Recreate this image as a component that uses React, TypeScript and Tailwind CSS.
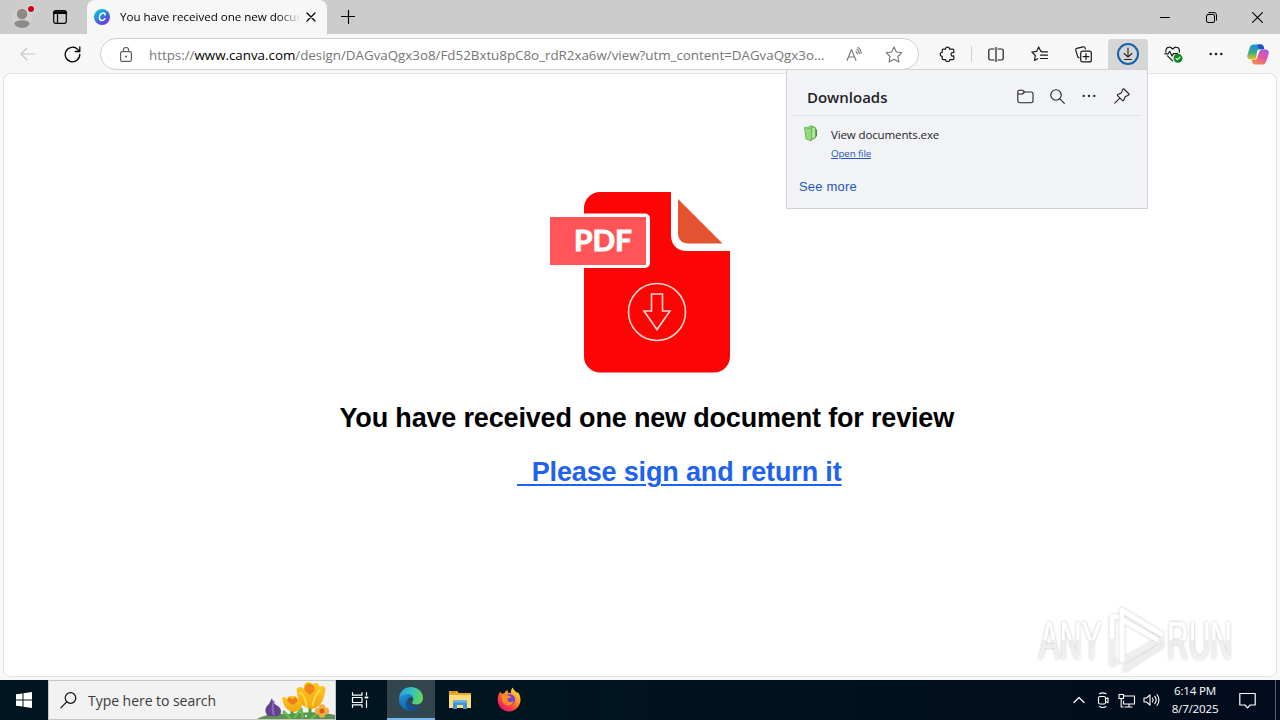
import type { ReactNode } from "react";

type IconProps = { w?: number; h?: number; vb?: string; className?: string; sw?: number; children: ReactNode };

function Icon({ w = 20, h = 20, vb, className = "", sw = 1.2, children }: IconProps) {
  return (
    <svg
      width={w}
      height={h}
      viewBox={vb ?? `0 0 ${w} ${h}`}
      fill="none"
      stroke="currentColor"
      strokeWidth={sw}
      strokeLinecap="round"
      strokeLinejoin="round"
      className={`block shrink-0 ${className}`}
    >
      {children}
    </svg>
  );
}

function Slot({ className, children }: { className: string; children: ReactNode }) {
  return <div className={`flex shrink-0 items-center justify-center ${className}`}>{children}</div>;
}

function CanvaLogo() {
  return (
    <svg width="16" height="16" viewBox="0 0 16 16" className="block shrink-0">
      <defs>
        <linearGradient id="canva" x1="0.15" y1="0.1" x2="0.8" y2="0.95">
          <stop offset="0" stopColor="#17c3cf" />
          <stop offset="0.45" stopColor="#2a7fdc" />
          <stop offset="1" stopColor="#7a2ae8" />
        </linearGradient>
      </defs>
      <circle cx="8" cy="8" r="8" fill="url(#canva)" />
      <path d="M10.900 6.100c.5-1.300-.2-2.200-1.500-2.200-2.200 0-4 2.300-4 4.700 0 1.900 1 3 2.500 3 1.300 0 2.400-.8 3-1.900" fill="none" stroke="#fff" strokeWidth="1.500" strokeLinecap="round" />
    </svg>
  );
}

function TabStrip() {
  return (
    <div className="flex h-[34px] shrink-0 bg-[#cccccc]">
      <div className="flex w-[87px] shrink-0 items-center">
        <Slot className="ml-[11px] w-[24px]">
          <svg width="24" height="26" viewBox="0 0 24 26" className="block">
            <circle cx="11" cy="13.500" r="10" fill="#d3d1cf" />
            <circle cx="11" cy="10" r="5.200" fill="#8d8986" />
            <path d="M3.500 19.500c0-2 3-3.300 7.500-3.300s7.500 1.300 7.500 3.300c0 2.200-3.300 4.300-7.500 4.300s-7.500-2.100-7.500-4.300z" fill="#8d8986" />
            <circle cx="20" cy="5" r="4" fill="#dddddd" />
            <circle cx="20" cy="5" r="3" fill="#d0021b" />
          </svg>
        </Slot>
        <Icon w={14} h={14} sw={1.200} className="ml-[18px] text-black">
          <rect x="0.700" y="0.700" width="12.600" height="12.600" rx="2" />
          <path d="M1 2h12M1 3.200h12" strokeWidth="1.600" />
          <path d="M4.500 4v9" />
        </Icon>
      </div>
      <div className="flex h-[34px] w-[240px] shrink-0 items-center rounded-t-[8px] bg-[#f7f7f7]">
        <div className="ml-[7px]">
          <CanvaLogo />
        </div>
        <div className="ml-[10px] w-[179px] overflow-hidden bg-linear-to-r from-black from-88% to-black/10 bg-clip-text text-[11.600px] leading-[20px] tracking-[-0.020px] whitespace-nowrap text-transparent">
          You have received one new docum
        </div>
        <Icon w={10} h={10} sw={1.200} className="ml-[7px] text-black">
          <path d="M1 1l8 8M9 1l-8 8" />
        </Icon>
      </div>
      <div className="flex grow items-center">
        <Icon w={14} h={14} sw={1.200} className="ml-[14px] text-black">
          <path d="M7.500 .5v13M.5 6.500h13" />
        </Icon>
      </div>
      <div className="flex shrink-0 items-center text-black">
        <Slot className="w-[46px]">
          <Icon w={10} h={10} sw={1}>
            <path d="M0 5.500h10" />
          </Icon>
        </Slot>
        <Slot className="w-[46px]">
          <Icon w={11} h={11} sw={1}>
            <rect x="0.500" y="2.500" width="8" height="8" rx="1.500" />
            <path d="M2.800 .6h5.200a2.500 2.500 0 0 1 2.500 2.500v5" />
          </Icon>
        </Slot>
        <Slot className="w-[46px]">
          <Icon w={11} h={11} sw={1.100}>
            <path d="M.6.6l9.800 9.800M10.400.6L.6 10.400" />
          </Icon>
        </Slot>
      </div>
    </div>
  );
}

function Copilot() {
  return (
    <svg width="22" height="21" viewBox="0 0 22 21" className="ml-px block">
      <defs>
        <linearGradient id="cpA" x1="0.300" y1="0" x2="0.300" y2="1">
          <stop offset="0" stopColor="#1b8fe0" />
          <stop offset="0.500" stopColor="#35a98a" />
          <stop offset="1" stopColor="#e8c416" />
        </linearGradient>
        <linearGradient id="cpB" x1="0.800" y1="0" x2="0.300" y2="1">
          <stop offset="0" stopColor="#a95be6" />
          <stop offset="0.500" stopColor="#e5569f" />
          <stop offset="1" stopColor="#f9864f" />
        </linearGradient>
      </defs>
      <path d="M7 .5h7c1.500 0 2.200 1 2.600 2.300l.7 2.400h-2.500c-1.500 0-2.400.8-2.900 2.300l-1.800 5.600c-.5 1.500-1.500 2.400-3 2.400H3.500C.8 15.500-.3 13.500.4 10.900L2.800 3.600C3.400 1.600 4.900.5 7 .5z" fill="url(#cpA)" />
      <path d="M10.500.5H14c1.500 0 2.200 1 2.600 2.300l.7 2.400h-3.500c-1.500 0-2.300-.8-2.700-2z" fill="#1f4fc4" />
      <path d="M15 20.500H8c-1.500 0-2.200-1-2.600-2.300l-.7-2.400h2.500c1.500 0 2.400-.8 2.900-2.300l1.800-5.600c.5-1.500 1.500-2.400 3-2.400h3.600c2.700 0 3.800 2 3.100 4.600l-2.400 7.300c-.6 2-2.100 3.100-4.200 3.100z" fill="url(#cpB)" />
      <path d="M10 7.800c.5-1.500 1.300-2.300 2.700-2.300h1.500c-1 .4-1.800 1.200-2.200 2.500l-1.900 5.500c-.5 1.500-1.200 2.200-2.500 2.300 0 0 1.300-1.300 1.700-2.600z" fill="#fff" />
    </svg>
  );
}

function Toolbar() {
  return (
    <div className="flex h-[39px] shrink-0 items-center bg-[#f7f7f7] pt-px text-[#1a1a1a]">
      <Slot className="ml-[6px] w-[44px]">
        <Icon w={16} h={14} sw={1.100} className="text-[#c4c4c4]">
          <path d="M15 7H1.200M7 1L1 7l6 6" />
        </Icon>
      </Slot>
      <Slot className="w-[44px]">
        <Icon w={17} h={17} sw={1.300} className="text-black">
          <path d="M15.800 8.500A7.300 7.300 0 1 1 13.700 3.400L15.600 5.200M15.800 1v4.500h-4.500" />
        </Icon>
      </Slot>
      <div className="ml-[6px] flex h-[32px] w-[819px] shrink-0 items-center rounded-full border border-[#cfcfcf] bg-white">
        <Icon w={12} h={15} sw={1.200} className="ml-[19px] text-[#5f5f5f]">
          <rect x="0.600" y="4.600" width="10.800" height="9.800" rx="1.500" />
          <path d="M3.300 4.500V3.200a2.700 2.700 0 0 1 5.400 0v1.300" />
          <circle cx="6" cy="9.500" r="0.500" fill="currentColor" />
        </Icon>
        <div className="ml-[17px] w-[690px] pt-px text-[13.400px] leading-[22px] tracking-[-0.030px] whitespace-nowrap text-[#767676]">
          https://<span className="text-black">www.canva.com</span>
          /design/DAGvaQgx3o8/Fd52Bxtu8pC8o_rdR2xa6w/view?utm_content=DAGvaQgx3o...
        </div>
        <Icon w={16} h={15} sw={1.100} className="ml-[7px] text-[#757575]">
          <path d="M1 13.500L5.500 2.500l4.500 11M2.500 10h6" />
          <path d="M10 4.500c.7.600 1.100 1.400 1.200 2.400M11 2.200c1.400 1 2.200 2.700 2.200 4.500M12 .5c2 1.300 3.200 3.500 3.200 6" />
        </Icon>
        <Icon w={18} h={17} sw={1.100} className="ml-[23px] text-[#757575]">
          <path d="M9 1l2.400 5 5.500.7-4 3.800 1 5.500L9 13.300 4.100 16l1-5.500-4-3.800L6.600 6z" />
        </Icon>
      </div>
      <Slot className="ml-[9px] w-[40px]">
        <Icon w={16} h={16} sw={1.200} className="-ml-[2px]">
          <path d="M4.300 3.200h2.200a2 2 0 0 1 4 0h3.300c.6 0 1 .4 1 1v2.500c-1.300-.6-2.800.2-2.800 1.600s1.500 2.300 2.800 1.600v2.700c0 .6-.4 1-1 1h-3.100a2.100 2.100 0 0 1-4.200 0H4.200c-.6 0-1-.4-1-1v-2.300a2 2 0 0 1 0-4V4.200c0-.6.400-1 1-1z" />
        </Icon>
      </Slot>
      <Slot className="w-[6px]">
        <div className="h-[16px] w-px bg-[#cfcfcf]" />
      </Slot>
      <Slot className="w-[43px]">
        <Icon w={16} h={15} sw={1.200}>
          <path d="M6 2H2.500C1.500 2 .8 2.700.8 3.700v7.600c0 1 .7 1.700 1.700 1.700H6M10 2h3.500c1 0 1.700.7 1.700 1.700v7.600c0 1-.7 1.700-1.700 1.700H10M8 .5v14" />
        </Icon>
      </Slot>
      <Slot className="w-[44px]">
        <Icon w={17} h={16} sw={1.200}>
          <path d="M10.800 5.400H9.900L7.700 1 5.600 5.400.9 6.100l3.400 3.400-.8 5 3.200-1.800M10.500 5.800h6M9.500 9.200h7M9.500 12.500h7" />
        </Icon>
      </Slot>
      <Slot className="w-[44px]">
        <Icon w={17} h={17} sw={1.200}>
          <rect x="5.700" y="5.200" width="10.600" height="10.700" rx="2" />
          <path d="M11 7.700v5.800M8.100 10.600h5.800M4 11.800 2.800 10.900.8 4.300c-.2-1 .2-1.700 1-2L8 .8c1-.2 1.800.2 2 1L10.400 3" />
        </Icon>
      </Slot>
      <Slot className="ml-[3px] h-[30px] w-[40px] rounded-t-[4px] bg-[#d6d6d6]">
        <Icon w={22} h={22} sw={1.100} className="text-[#222222]">
          <circle cx="11" cy="11" r="10" stroke="#1464ac" strokeWidth="2" />
          <path d="M11 5v9M7.200 10.500L11 14.200l3.800-3.700M7.500 16.500h7" />
        </Icon>
      </Slot>
      <Slot className="w-[50px]">
        <Icon w={19} h={17} sw={1.200}>
          <path d="M2 6.200C1.300 4 2.500 1.400 5 1.200 6.700 1 7.800 2 8.700 3.100 9.600 2 10.700 1 12.400 1.200c2.500.2 3.700 2.800 2.800 5M.8 7.800h3.400l1.500-2.500L8 10l1.500-2.300h4M3.500 9.800l5 5" />
          <circle cx="14" cy="12.300" r="4.500" fill="#0f8a24" stroke="none" />
          <path d="M12 12.300l1.400 1.400 2.600-2.600" stroke="#fff" />
        </Icon>
      </Slot>
      <Slot className="w-[36px]">
        <Icon w={14} h={4} sw={0}>
          <g fill="currentColor">
            <circle cx="1.700" cy="2" r="1.250" />
            <circle cx="7" cy="2" r="1.250" />
            <circle cx="12.300" cy="2" r="1.250" />
          </g>
        </Icon>
      </Slot>
      <Slot className="w-[46px]">
        <Copilot />
      </Slot>
    </div>
  );
}

function DownloadsPanel() {
  return (
    <div className="absolute top-[69px] left-[786px] flex h-[140px] w-[362px] flex-col border border-[#d0d2d6] bg-[#f1f3f7] text-[#242424]">
      <div className="mx-[6px] flex h-[46px] shrink-0 items-center border-b border-[#dfe1e5] pt-[7px] pr-[11px] pl-[14px]">
        <div className="grow pt-px text-[15px] leading-[22px] font-semibold tracking-[-0.020px] whitespace-nowrap">Downloads</div>
        <Icon w={17} h={15} sw={1.100}>
          <path d="M.8 3c0-1 .6-1.700 1.700-1.700h3.300L7.500 3H14c1.300 0 2 .7 2 1.800v7c0 1.200-.7 1.900-2 1.900H2.700c-1.200 0-1.900-.7-1.900-1.900zM.8 5h4.700l2-2" />
        </Icon>
        <Icon w={15} h={15} sw={1.100} className="ml-[16px]">
          <circle cx="6" cy="6" r="5.200" />
          <path d="M9.800 9.800l4.500 4.500" />
        </Icon>
        <Icon w={14} h={4} sw={0} className="ml-[17px]">
          <g fill="currentColor">
            <circle cx="1.700" cy="2" r="1.150" />
            <circle cx="7" cy="2" r="1.150" />
            <circle cx="12.300" cy="2" r="1.150" />
          </g>
        </Icon>
        <Icon w={16} h={16} sw={1.100} className="ml-[18px]">
          <path d="M10 1l5 5c.3.400.2.900-.3 1.100l-3.500 1.600-1.500 3.600c-.2.600-.8.700-1.200.3L3.600 7.700c-.4-.4-.3-1 .2-1.200l3.500-1.600L8.900 1.200c.2-.4.700-.6 1.100-.2zM5.800 10.200L.8 15.200" />
        </Icon>
      </div>
      <div className="flex pt-[8px] pl-[16px]">
        <svg width="17" height="18" viewBox="0 0 17 18" className="block shrink-0">
          <path d="M1.500 4l7-3 4.500 2.500v10.500l-5 3L3 14.500z" fill="#8fd37c" />
          <path d="M8 2.500l4.500 1.500v9.500L8 15.500z" fill="#b2e6a3" stroke="#5faf4a" />
          <path d="M1.500 3.500l7.500 1.500L8 17l-5-2z" fill="#94d981" stroke="#5fb04b" strokeWidth=".8" />
          <path d="M13.500 5.500v7" stroke="#438d35" />
        </svg>
        <div className="ml-[11px]">
          <div className="text-[11.500px] leading-[22px] tracking-[-0.120px] whitespace-nowrap">View documents.exe</div>
          <div className="text-[9.800px] leading-[15px] tracking-[-0.150px] whitespace-nowrap text-[#2555b8] underline">Open file</div>
        </div>
      </div>
      <div className="mt-[16px] pl-[12px] font-['Liberation_Sans'] text-[13px] leading-[20px] tracking-[0.200px] text-[#1f57ba]">See more</div>
    </div>
  );
}

function PdfArt() {
  return (
    <svg width="182" height="182" viewBox="0 0 182 182" className="block">
      <path d="M50 1h72v43c0 10 6 16 16 16h43v105a16 16 0 0 1-16 16.500H51a16 16 0 0 1-16-16V17A16 16 0 0 1 51 1z" fill="#fb0505" />
      <path d="M129 8l44.500 44.500h-34.500c-6 0-10-4-10-10z" fill="#e4532f" />
      <path d="M34 22.500h62a5 5 0 0 1 5 5v44.500a5 5 0 0 1-5 5H34z" fill="#fff" />
      <path d="M1 26h96v48H1z" fill="#ff5558" />
      <text x="25" y="60" fontSize="29" fontWeight="700" fontFamily="Lato, 'Open Sans', sans-serif" fill="#fff" stroke="#fff" strokeWidth=".9" textLength="58" lengthAdjust="spacingAndGlyphs">PDF</text>
      <g fill="none" stroke="#ffd6cf" strokeWidth="1.600">
        <circle cx="108" cy="121" r="28.500" />
        <path d="M102.500 103h11v17h7.500l-13 18.500L95 120h7.500z" />
      </g>
    </svg>
  );
}

function Watermark() {
  return (
    <svg width="204" height="68" viewBox="0 0 204 68" className="block overflow-visible">
      <defs>
        <filter id="wmShadow" x="-10%" y="-10%" width="120%" height="125%">
          <feDropShadow dx="0" dy="0" stdDeviation="1.500" floodColor="#000" floodOpacity="0.280" />
        </filter>
        <linearGradient id="wmFill" gradientUnits="userSpaceOnUse" x1="0" y1="0" x2="0" y2="60">
          <stop offset="0.560" stopColor="#ffffff" />
          <stop offset="0.570" stopColor="#ececec" />
          <stop offset="1" stopColor="#f4f4f4" />
        </linearGradient>
      </defs>
      <g filter="url(#wmShadow)" fill="url(#wmFill)" fontFamily="'Liberation Sans', sans-serif" fontSize="54" fontWeight="400">
        <text x="6" y="53" textLength="63" lengthAdjust="spacingAndGlyphs">ANY</text>
        <text x="134" y="53" textLength="65" lengthAdjust="spacingAndGlyphs">RUN</text>
        <g fill="none" strokeWidth="4.500" strokeLinejoin="round" strokeLinecap="round">
          <path d="M92 63L129 39" stroke="#ededed" />
          <path d="M90 55L128 33" stroke="#efefef" />
          <path d="M79 11v47l5-2" stroke="#eeeeee" />
          <path d="M79 31V11h5" stroke="#ffffff" />
          <path d="M89 54V4l39 24M90 14l33 19" stroke="#ffffff" />
        </g>
      </g>
    </svg>
  );
}

function Page() {
  return (
    <div className="flex h-[607px] shrink-0 bg-[#f6f7f8] px-[3px] pb-[3px]">
      <div className="flex h-[604px] grow flex-col rounded-[8px] border border-[#e2e2e2] bg-white font-['Liberation_Sans'] font-bold">
        <div className="pt-[117px] pl-[545px]">
          <PdfArt />
        </div>
        <h1 className="mt-[27px] pl-[335.500px] text-[27px] leading-[36px] tracking-[-0.170px] whitespace-nowrap text-black">
          You have received one new document for review
        </h1>
        <a className="mt-[18px] pl-[513px] text-[27px] leading-[36px] tracking-[-0.150px] whitespace-pre text-[#1e62f0]">
          <span className="underline decoration-2 underline-offset-[3px]">{"\u00a0\u00a0Please sign and return it"}</span>
        </a>
        <div className="mt-[116px] pl-[1029px]">
          <Watermark />
        </div>
      </div>
    </div>
  );
}

function Flowers() {
  return (
    <svg width="78" height="38" viewBox="0 0 78 38" className="block">
      <defs>
        <linearGradient id="petal" x1="0" y1="0" x2="0" y2="1">
          <stop offset="0" stopColor="#ffc928" />
          <stop offset="1" stopColor="#f1a50b" />
        </linearGradient>
      </defs>
      <path d="M0 38c8-5 20-6 32-5 14-2 30-3 46 1v4z" fill="#5d9352" />
      <path d="M11 35c-4-4-3-9 1-12l3-6c1 4 2 6 6 8 4 3 4 8 0 10z" fill="#654190" />
      <path d="M17 20c-2 5-2 9 0 14" stroke="#8f68ba" strokeWidth="2" fill="none" />
      <path d="M35 38V27M53 38V26" stroke="#4aa13c" strokeWidth="3" />
      <path d="M26 30l8 8M46 37L44 27M54 38l14-12M37 37l8-10" stroke="#67b849" strokeWidth="2.500" />
      <path d="M25 17c2-2 4-1 5 1l2-3h7l1 3c2-2 4-3 6-1 0 8-3 13-9 14-7-1-11-6-12-14z" fill="url(#petal)" />
      <path d="M30 20l2-4 3 2 4-2 2 4-5 4z" fill="#eb7d1b" />
      <g transform="translate(-2.500 0)">
        <path d="M42 8c3-3 5-2 7 0l1-5c3-3 6-2 8 0 3-2 7-1 7 3 3-2 5-1 6 1-1 12-5 20-14 21-10-1-14-9-15-20z" fill="url(#petal)" />
        <path d="M50 9c0-5 3-7 6-6s5 3 4 7l-5 4z" fill="#ee861c" />
        <path d="M45 11c5 4 7 9 7 15M66 9c-5 4-7 10-8 16" stroke="#ffd94b" strokeWidth="2" fill="none" />
      </g>
      <g fill="#f4ac45" transform="translate(-4 1)">
        <circle cx="69" cy="25.500" r="3.200" />
        <circle cx="73" cy="29" r="3.200" />
        <circle cx="69" cy="32.500" r="3.200" />
        <circle cx="65" cy="29" r="3.200" />
        <circle cx="69" cy="29" r="2.500" fill="#d5621a" />
      </g>
      <circle cx="49" cy="35" r="1" fill="#fff" />
    </svg>
  );
}

function EdgeLogo() {
  return (
    <svg width="26" height="26" viewBox="0 0 26 26" className="block">
      <defs>
        <linearGradient id="edgeTop" x1="0" y1="0.300" x2="1" y2="0.500">
          <stop offset="0" stopColor="#259fdb" />
          <stop offset="0.500" stopColor="#35c1c6" />
          <stop offset="1" stopColor="#67d84e" />
        </linearGradient>
        <linearGradient id="edgeLow" x1="0" y1="0" x2="0.600" y2="1">
          <stop offset="0" stopColor="#1f98dc" />
          <stop offset="1" stopColor="#0c59a4" />
        </linearGradient>
      </defs>
      <path d="M1 12C1.500 5.500 6.500 1 13 1c7 0 12 5 12 11 0 4-3 6.500-6.500 6.500-3 0-4.500-1-4.500-2 0-.8 1.300-1.300 1.300-3.200 0-2.500-2.300-4.300-5.500-4.300C6 9 3 10 1 12z" fill="url(#edgeTop)" />
      <path d="M1 12.500C2.500 9.500 6 8 9.800 8c3.400 0 5.700 2.300 5.700 5-1-1.300-2.300-2-3.700-1.500C9.600 12.200 9 14.500 10 17c1.700 4 7 5.300 12.500 2.500C20.500 23 17 25 13 25 6 25 .6 19.500 1 12.500z" fill="url(#edgeLow)" />
      <path d="M10 17c1.700 4 7 5.300 12.500 2.500-2 3.300-5.500 5.300-9 5.400C9 24 7 18.500 8.500 15c.6-1.500 1.700-3 3.300-3.500C9.600 12.200 9 14.500 10 17z" fill="#124f97" />
    </svg>
  );
}

function FolderLogo() {
  return (
    <svg width="24" height="22" viewBox="0 0 24 22" className="block">
      <path d="M1 2h8l2 2h12v15H1z" fill="#e9a92f" />
      <path d="M1 6h22v13H1z" fill="#ffdb79" />
      <path d="M3 3h5" stroke="#d07b21" />
      <path d="M5 11.500h14v8.500h-4v-4H9v4H5z" fill="#3f95d6" />
      <path d="M5 11.500h14v2H5z" fill="#64b4ea" />
    </svg>
  );
}

function FirefoxLogo() {
  return (
    <svg width="24" height="25" viewBox="0 0 24 25" className="mb-px block">
      <defs>
        <linearGradient id="fox" x1="0.850" y1="0.050" x2="0.200" y2="0.900">
          <stop offset="0" stopColor="#ffe33d" />
          <stop offset="0.450" stopColor="#ff8a1f" />
          <stop offset="0.750" stopColor="#ff3c43" />
          <stop offset="1" stopColor="#e01c72" />
        </linearGradient>
      </defs>
      <path d="M3.500 4.500c.2 1 .6 1.700 1.200 2.300L7.500 6c1-1.800 1.800-2.600 3-3 0 1.200.2 2 1 2.700L14 6c-.3-2 .3-4 1.700-5.500 1 3 3.200 3.800 4.700 5.800.2-.6.200-1.100.1-1.700 2.200 2.600 3.100 5.500 3 8.700C23.200 19.500 18.200 24.500 12 24.500S.7 19.500.7 13c0-3.200.9-6.300 2.800-8.500z" fill="url(#fox)" />
      <circle cx="12.500" cy="12.800" r="5.700" fill="#7542d8" />
      <path d="M4.500 9c2-2 4.500-2.300 6.500-.5L14 9.300c-.5 1.600-1.800 2.200-3.500 2.200-.5 2 1 3.700 3 3.500 1.500-.2 2.500-1 3.300-1-.7 2.500-2.800 4.500-5.600 4.500C7.500 18.500 4.700 15 4.500 9z" fill="#ff8e24" />
    </svg>
  );
}

function Taskbar() {
  return (
    <div className="flex h-[40px] shrink-0 bg-linear-to-r from-[#00151f] from-40% to-[#020b1d] text-white">
      <Slot className="w-[48px]">
        <svg width="16" height="16" viewBox="0 0 16 16" className="block">
          <path d="M0 2.300L6.500 1.400v6.100H0zM7.500 1.200L16 0v7.500H7.500zM0 8.500h6.500v6.100L0 13.700zM7.500 8.500H16V16l-8.500-1.200z" fill="#fff" />
        </svg>
      </Slot>
      <div className="flex w-[288px] shrink-0 items-center border border-[#c5c5c5] bg-[#f2f2f2] text-[#3b3b3b]">
        <Icon w={17} h={17} sw={1.200} className="ml-[11px] text-[#111111]">
          <circle cx="10.500" cy="6" r="5.300" />
          <path d="M6.700 9.800L.8 15.800" />
        </Icon>
        <div className="ml-[11px] grow pt-[2px] text-[14px] leading-[22px] tracking-[-0.040px] whitespace-nowrap">Type here to search</div>
        <Flowers />
      </div>
      <Slot className="mr-[3px] w-[48px]">
        <Icon w={18} h={16} sw={1.200}>
          <path d="M1.500 .7v2.500h9.500V.7M1.500 15.300v-2.500h9.500v2.500M1.500 5.500h9.500v5H1.500zM15.500 .7v2.500M15.500 8.500v6.800" />
          <path d="M14.500 5.500h2" strokeWidth="2" />
        </Icon>
      </Slot>
      <Slot className="w-[48px] border-b-2 border-[#76b9ed] bg-[#33464e]">
        <EdgeLogo />
      </Slot>
      <Slot className="w-[49px]">
        <FolderLogo />
      </Slot>
      <Slot className="w-[49px]">
        <FirefoxLogo />
      </Slot>
      <div className="flex grow items-center justify-end">
        <Icon w={12} h={8} sw={1.200}>
          <path d="M1 6.500l5-5 5 5" />
        </Icon>
        <Icon w={12} h={16} sw={1.100} className="ml-[12px]">
          <rect x="1.500" y="4.500" width="7" height="7.500" rx="1.500" />
          <path d="M8.500 7l2.500-1.300v5L8.500 9.500M2.500 1.800c2-1.200 4.500-1.200 6.500 0M2.500 14.500c2 1.200 4.500 1.200 6.500 0" />
        </Icon>
        <Icon w={18} h={15} sw={1.100} className="ml-[9px]">
          <path d="M6 3h10.500v8H5.500V8M11 11v3M7 14h7M1 1.500h4.500v4H1zM3.200 5.500V14h2" />
        </Icon>
        <Icon w={17} h={14} sw={1.100} className="ml-[7px]">
          <path d="M1 5h2.500L7 1.800v10.400L3.500 9H1zM9.500 5c.8 1.200.8 2.800 0 4M11.800 3.300c1.700 2.200 1.700 5.200 0 7.400M14 1.500c2.600 3.200 2.600 7.800 0 11" />
        </Icon>
      </div>
      <div className="flex w-[70px] shrink-0 flex-col items-center justify-center text-center text-[11.600px] leading-[18px] tracking-[-0.200px]">
        <div>6:14 PM</div>
        <div>8/7/2025</div>
      </div>
      <Slot className="w-[34px]">
        <Icon w={17} h={17} sw={1.200}>
          <path d="M.8 1.500h15.400v11.500h-5L8.500 15.800 6 13H.8z" />
        </Icon>
      </Slot>
      <div className="ml-[11px] w-[5px] shrink-0 border-l border-[#56606c]" />
    </div>
  );
}

export default function App() {
  return (
    <div className="relative flex h-[720px] w-[1280px] flex-col overflow-hidden bg-[#f7f7f7] font-['Open_Sans','Noto_Sans',sans-serif]">
      <TabStrip />
      <Toolbar />
      <Page />
      <Taskbar />
      <DownloadsPanel />
    </div>
  );
}
